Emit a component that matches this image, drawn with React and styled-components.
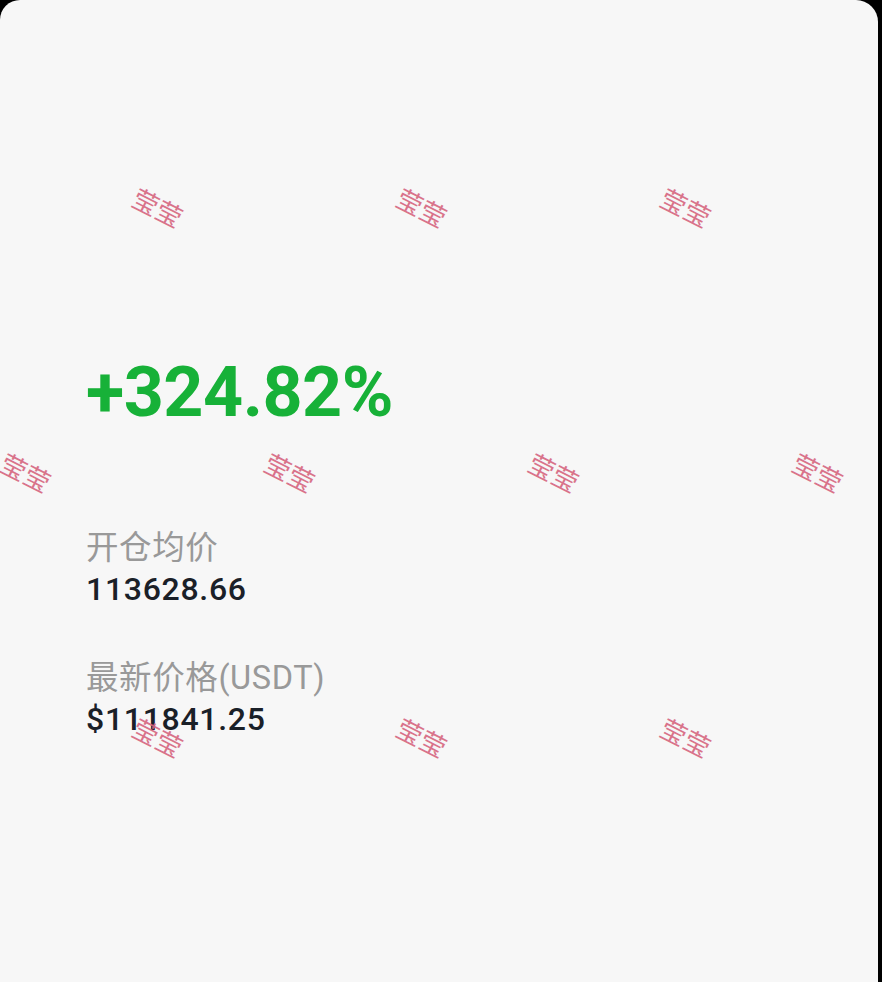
import React from "react";
import styled, { createGlobalStyle } from "styled-components";

const Global = createGlobalStyle`
  html, body { margin: 0; padding: 0; background: #000; }
  body { font-family: Roboto, "Noto Sans CJK SC", sans-serif; }
`;

const Screen = styled.div`
  width: 882px;
  height: 982px;
  overflow: hidden;
  background: #000;
  position: relative;
`;

const Card = styled.div`
  width: 878px;
  height: 1000px;
  background: #f7f7f7;
  border-radius: 20px 22px 0 0;
  box-sizing: border-box;
  padding: 352px 0 0 86px;
  display: flex;
  flex-direction: column;
`;

const Profit = styled.div`
  font-family: Roboto, sans-serif;
  font-weight: 700;
  font-size: 70px;
  line-height: 80px;
  color: #17b138;
  letter-spacing: -0.5px;
  margin-bottom: 96px;
`;

const Field = styled.div`
  display: flex;
  flex-direction: column;
  margin-bottom: ${(p) => p.$gap || 0}px;
`;

const Label = styled.div`
  font-family: Roboto, "Noto Sans CJK SC", sans-serif;
  font-size: 32.5px;
  line-height: 40px;
  letter-spacing: 0.6px;
  color: #999999;
`;

const Value = styled.div`
  font-family: Roboto, sans-serif;
  font-weight: 500;
  font-size: 32px;
  line-height: 40px;
  color: #1a2028;
  letter-spacing: 0.7px;
  padding-top: 1px;
  margin-bottom: -1px;
`;

const Overlay = styled.div`
  position: absolute;
  inset: 0;
  pointer-events: none;
`;

const Mark = styled.span`
  position: absolute;
  font-family: "Noto Sans CJK SC", sans-serif;
  font-size: 26px;
  line-height: 1;
  color: #d6657f;
  opacity: 0.9;
  transform: translate(-50%, -50%) rotate(27deg);
  white-space: nowrap;
`;

const marks = [];
const rows = [207, 472, 737, 1002];
rows.forEach((y, i) => {
  const xs = i % 2 === 0 ? [158, 422, 686] : [26, 290, 554, 818];
  xs.forEach((x) => marks.push({ x, y }));
});

export default function App() {
  return (
    <>
      <Global />
      <Screen>
        <Card>
          <Profit>+324.82%</Profit>
          <Field $gap={50}>
            <Label>开仓均价</Label>
            <Value>113628.66</Value>
          </Field>
          <Field>
            <Label>最新价格(USDT)</Label>
            <Value>$111841.25</Value>
          </Field>
        </Card>
        <Overlay>
          {marks.map((m, i) => (
            <Mark key={i} style={{ left: m.x, top: m.y }}>
              莹莹
            </Mark>
          ))}
        </Overlay>
      </Screen>
    </>
  );
}
